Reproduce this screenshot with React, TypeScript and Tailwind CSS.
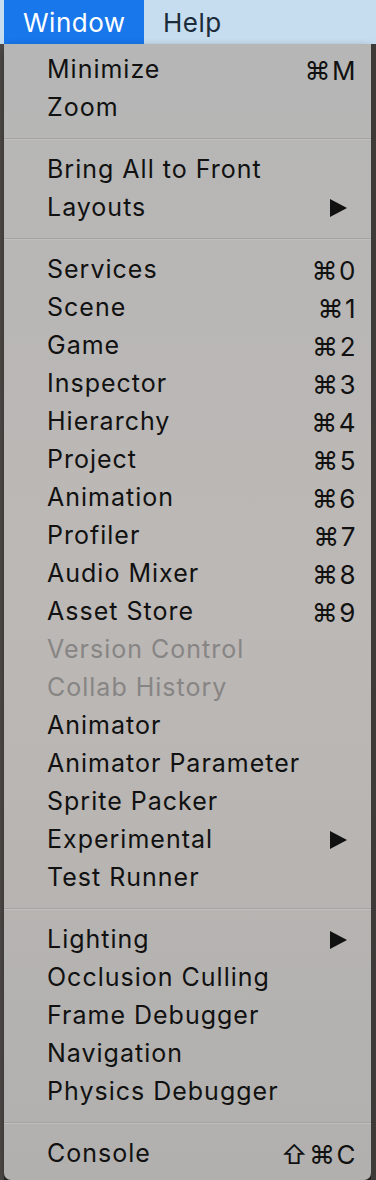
import { ReactNode } from "react";

type Item = {
  label: string;
  shortcut?: string;
  submenu?: boolean;
  disabled?: boolean;
};

const groups: Item[][] = [
  [{ label: "Minimize", shortcut: "⌘M" }, { label: "Zoom" }],
  [{ label: "Bring All to Front" }, { label: "Layouts", submenu: true }],
  [
    { label: "Services", shortcut: "⌘0" },
    { label: "Scene", shortcut: "⌘1" },
    { label: "Game", shortcut: "⌘2" },
    { label: "Inspector", shortcut: "⌘3" },
    { label: "Hierarchy", shortcut: "⌘4" },
    { label: "Project", shortcut: "⌘5" },
    { label: "Animation", shortcut: "⌘6" },
    { label: "Profiler", shortcut: "⌘7" },
    { label: "Audio Mixer", shortcut: "⌘8" },
    { label: "Asset Store", shortcut: "⌘9" },
    { label: "Version Control", disabled: true },
    { label: "Collab History", disabled: true },
    { label: "Animator" },
    { label: "Animator Parameter" },
    { label: "Sprite Packer" },
    { label: "Experimental", submenu: true },
    { label: "Test Runner" },
  ],
  [
    { label: "Lighting", submenu: true },
    { label: "Occlusion Culling" },
    { label: "Frame Debugger" },
    { label: "Navigation" },
    { label: "Physics Debugger" },
  ],
  [{ label: "Console", shortcut: "⇧⌘C" }],
];

function Row({ item }: { item: Item }) {
  let right: ReactNode = null;
  if (item.shortcut) {
    right = <span className="text-[26px] tracking-[1.5px]">{item.shortcut}</span>;
  } else if (item.submenu) {
    right = (
      <svg width="17" height="18" viewBox="0 0 17 18" className="mr-[10px]">
        <path d="M0 0 L17 9 L0 18 Z" fill="#111" />
      </svg>
    );
  }
  return (
    <div
      className={`flex h-[38px] items-center justify-between pl-[43px] pr-[14px] ${
        item.disabled ? "text-[#878584]" : "text-[#111]"
      }`}
    >
      <span className="tracking-[1px]">{item.label}</span>
      {right}
    </div>
  );
}

export default function App() {
  return (
    <div
      className="flex h-[1180px] w-[376px] flex-col overflow-hidden bg-[#2b2b2b] text-[25px]"
      style={{ fontFamily: "Inter, 'Liberation Sans', sans-serif" }}
    >
      {/* menu bar */}
      <div className="flex h-[44px] shrink-0 items-center bg-[#c6ddef] pl-[4px] text-[26px] tracking-[0.5px]">
        <div className="flex h-full w-[140px] items-center bg-[#1877eb] pl-[19px] text-white">
          Window
        </div>
        <div className="pl-[19px] text-[#1b2b3a]">Help</div>
      </div>

      <div className="flex flex-1">
        <div className="w-[4px] bg-[#4f4b48]" />
        {/* dropdown */}
        <div className="flex h-[1136px] w-[367px] flex-col rounded-b-[7px] bg-gradient-to-b from-[#b6b6b6] via-[#bcb8b5] to-[#b1b0ae] pt-[7px] shadow-[0_4px_10px_rgba(0,0,0,0.4)]">
          {groups.map((g, gi) => (
            <div key={gi}>
              {gi > 0 && (
                <div className="flex h-[24px] items-center">
                  <div className="h-[2px] w-full border-b border-[#c2c0be] bg-[#a4a3a2]" />
                </div>
              )}
              {g.map((it) => (
                <Row key={it.label} item={it} />
              ))}
            </div>
          ))}
        </div>
        <div className="w-[5px] bg-[#3d3a38]" />
      </div>
    </div>
  );
}
